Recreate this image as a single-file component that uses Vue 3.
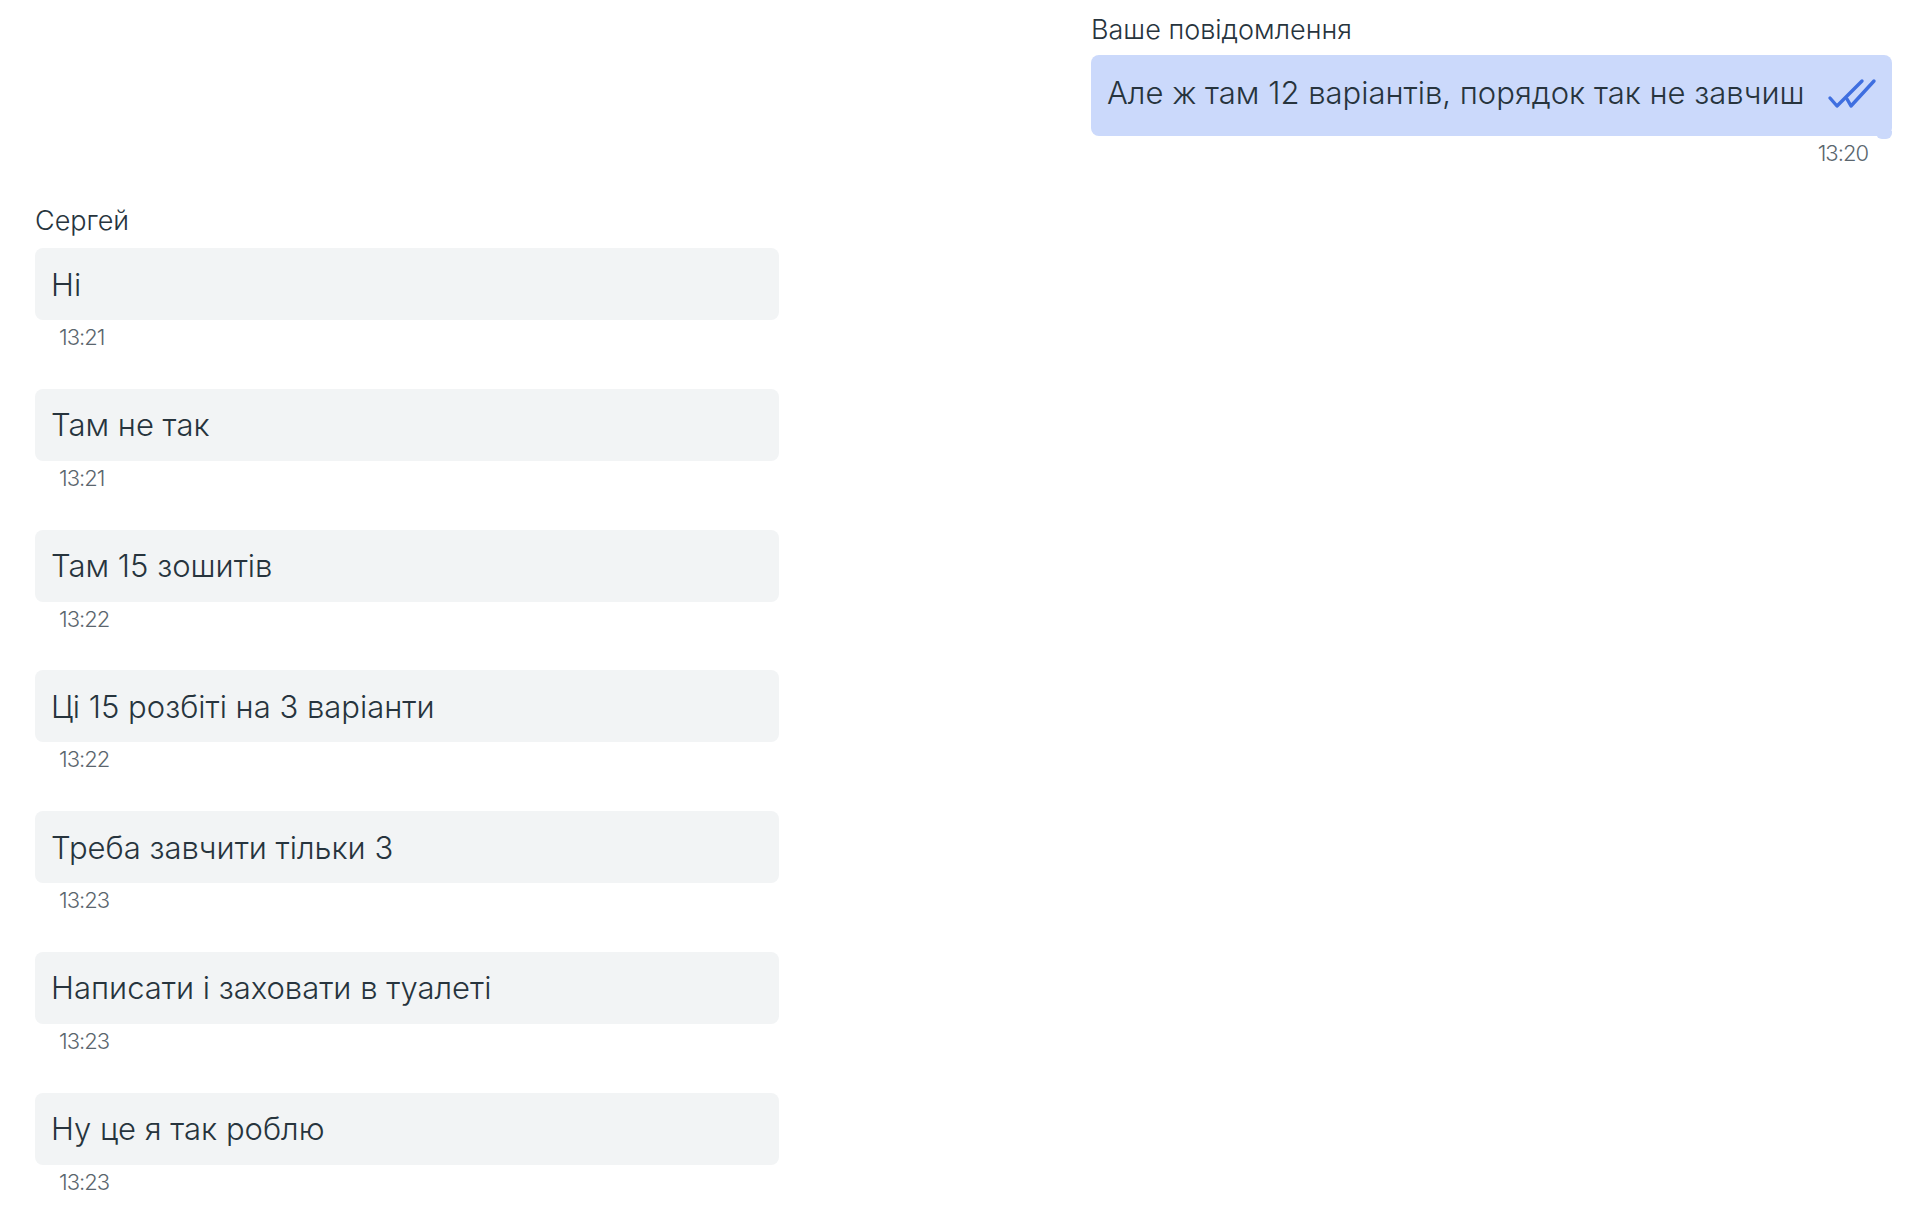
<script setup>
const incoming = [
  { text: 'Ні', time: '13:21' },
  { text: 'Там не так', time: '13:21' },
  { text: 'Там 15 зошитів', time: '13:22' },
  { text: 'Ці 15 розбіті на 3 варіанти', time: '13:22' },
  { text: 'Треба завчити тільки 3', time: '13:23' },
  { text: 'Написати і заховати в туалеті', time: '13:23' },
  { text: 'Ну це я так роблю', time: '13:23' },
]
</script>

<template>
  <main class="chat">
    <section class="outgoing">
      <div class="name">Ваше повідомлення</div>
      <div class="bubble own">
        <span class="text">Але ж там 12 варіантів, порядок так не завчиш</span>
        <svg class="ticks" viewBox="0 0 52 32" width="52" height="32" fill="none" stroke="#3f6fe0" stroke-width="3.4" stroke-linecap="round" stroke-linejoin="round">
          <path d="M4 21 L11 29 L36 4" />
          <path d="M21 22 L25 29 L48 4" />
        </svg>
      </div>
      <div class="time own-time">13:20</div>
    </section>

    <section class="incoming">
      <div class="name">Сергей</div>
      <div v-for="(m, i) in incoming" :key="i" class="message">
        <div class="bubble other"><span class="text">{{ m.text }}</span></div>
        <div class="time">{{ m.time }}</div>
      </div>
    </section>
  </main>
</template>

<style scoped>
.chat {
  width: 1920px;
  height: 1221px;
  overflow: hidden;
  box-sizing: border-box;
  padding: 13px 28px 0 35px;
  background: #ffffff;
  font-family: Inter, "Noto Sans", sans-serif;
  font-weight: 300;
  color: #27343d;
  display: flex;
  flex-direction: column;
}
.outgoing {
  align-self: flex-end;
  width: 801px;
}
.name {
  font-size: 27px;
  line-height: 34px;
  margin-bottom: 8px;
}
.bubble {
  box-sizing: border-box;
  border-radius: 8px;
  display: flex;
  align-items: center;
  padding: 0 16px;
}
.text {
  font-size: 31px;
}
.own {
  position: relative;
  height: 81px;
  padding-bottom: 6px;
  background: #cbd9fb;
  justify-content: space-between;
}
.own::after {
  content: "";
  position: absolute;
  right: 0;
  bottom: -3px;
  width: 16px;
  height: 8px;
  background: #cbd9fb;
  border-radius: 0 0 6px 6px;
}
.ticks {
  margin-right: -2px;
}
.time {
  font-size: 22px;
  line-height: 30px;
  margin: 2px 0 0 24px;
  color: #5b666e;
  letter-spacing: -1px;
}
.own-time {
  margin: 2px 24px 0 0;
  text-align: right;
}
.incoming {
  margin-top: 36px;
  width: 744px;
}
.incoming .name {
  margin-bottom: 10px;
}
.message {
  margin-bottom: 36.8px;
}
.other {
  height: 72px;
  background: #f2f4f5;
}
</style>
